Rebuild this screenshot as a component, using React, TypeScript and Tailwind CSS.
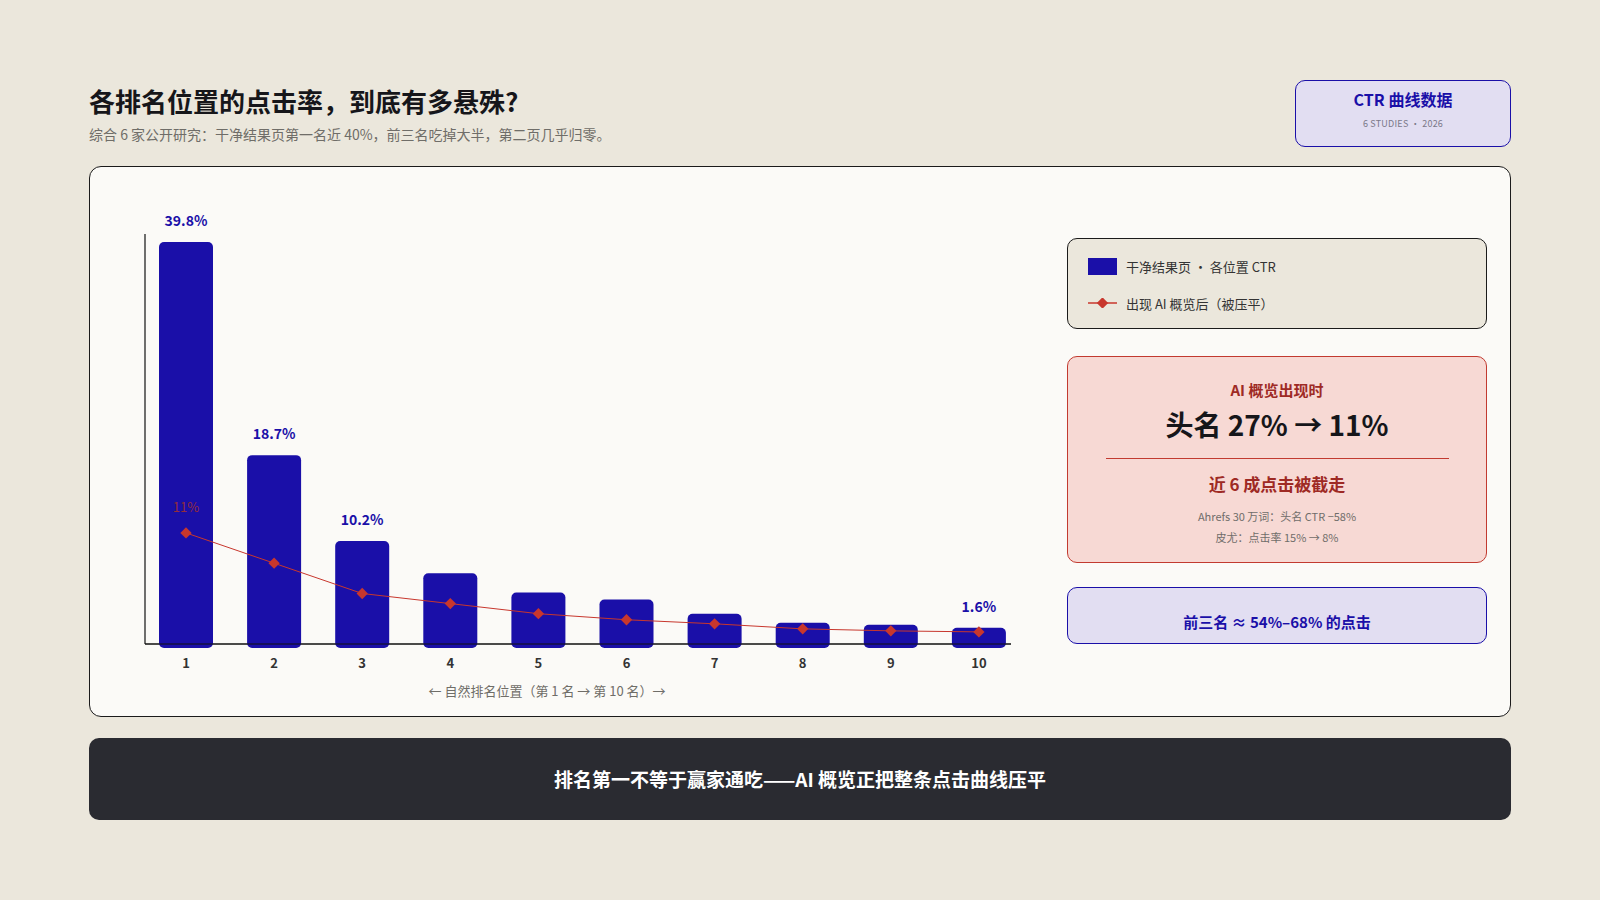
export default function App() {
  const bars = [39.8, 18.7, 10.2, 7.0, 5.1, 4.4, 3.0, 2.1, 1.9, 1.6];
  const line = [11, 8, 5, 4, 3, 2.4, 2, 1.5, 1.3, 1.2];
  const k = 10.1;
  const base = 477; // relative to card top (643-166)
  const x0 = 69; // bar1 left (158-89)
  const step = 88.1;
  const bw = 54;
  const cx = (i: number) => x0 + i * step + bw / 2;
  const labels: Record<number, string> = { 0: "39.8%", 1: "18.7%", 2: "10.2%", 9: "1.6%" };
  const pts = line.map((v, i) => `${cx(i)},${base - v * k}`).join(" ");
  return (
    <div className="w-[1600px] h-[900px] bg-[#ebe7dc] px-[89px] pt-[82px]" style={{ fontFamily: '"Noto Sans CJK SC", "Noto Sans", sans-serif' }}>
      <div className="flex justify-between items-start h-[84px]">
        <div>
          <h1 className="text-[26px] font-bold text-[#16161a] leading-[38px]">各排名位置的点击率，到底有多悬殊?</h1>
          <p className="text-[14px] text-[#6f6d68] mt-[4px]">综合 6 家公开研究：干净结果页第一名近 40%，前三名吃掉大半，第二页几乎归零。</p>
        </div>
        <div className="w-[216px] h-[67px] -mt-[2px] rounded-[10px] border-[1.5px] border-[#1a0fa8] bg-[#e2def2] flex flex-col items-center pt-[6px]">
          <div className="text-[16px] font-bold text-[#1a0fa8]">CTR 曲线数据</div>
          <div className="text-[9px] text-[#7a7888] tracking-wide mt-[6px]">6 STUDIES · 2026</div>
        </div>
      </div>
      <div className="h-[551px] rounded-[12px] border-[1.5px] border-[#1b1b1b] bg-[#fbfaf7] flex">
        <svg width="950" height="548" className="shrink-0">
          <line x1="55" y1="67" x2="55" y2={base} stroke="#111" strokeWidth="1.2" />
          <line x1="55" y1={base} x2="921" y2={base} stroke="#111" strokeWidth="1.2" />
          {bars.map((v, i) => (
            <g key={i}>
              <rect x={x0 + i * step} y={base - v * k} width={bw} height={v * k + 4} rx="5" fill="#1a0fa8" />
              <text x={cx(i)} y={base + 24} textAnchor="middle" fontSize="13" fontWeight="700" fill="#333">{i + 1}</text>
              {labels[i] && (
                <text x={cx(i)} y={base - v * k - 16} textAnchor="middle" fontSize="14" fontWeight="700" fill="#1a0fa8">{labels[i]}</text>
              )}
            </g>
          ))}
          <rect x={x0} y={base - 1} width={step * 9 + bw} height="3" fill="#fbfaf7" opacity="0" />
          <line x1="55" y1={base} x2="921" y2={base} stroke="#111" strokeWidth="1.2" />
          <polyline points={pts} fill="none" stroke="#c8372d" strokeWidth="1" />
          {line.map((v, i) => (
            <rect key={i} x={cx(i) - 4} y={base - v * k - 4} width="8" height="8" fill="#c8372d" transform={`rotate(45 ${cx(i)} ${base - v * k})`} />
          ))}
          <text x={cx(0)} y={base - 11 * k - 21} textAnchor="middle" fontSize="13" fill="#a8332a" opacity="0.85">11%</text>
          <text x="457" y={base + 52} textAnchor="middle" fontSize="13" fill="#6f6d68">← 自然排名位置（第 1 名 → 第 10 名）→</text>
        </svg>
        <div className="flex-1 pt-[71px] pr-[23px] pl-[27px] flex flex-col">
          <div className="h-[91px] rounded-[10px] border-[1.5px] border-[#1b1b1b] bg-[#ebe7dc] px-[20px] pt-[18px] flex flex-col gap-[17px] text-[13px] text-[#333]">
            <div className="flex items-center gap-[9px]"><span className="w-[29px] h-[17px] bg-[#1a0fa8]" />干净结果页 · 各位置 CTR</div>
            <div className="flex items-center gap-[9px]">
              <svg width="29" height="10"><line x1="0" y1="5" x2="29" y2="5" stroke="#c8372d" strokeWidth="1.5" /><rect x="10.5" y="1" width="8" height="8" fill="#c8372d" transform="rotate(45 14.5 5)" /></svg>
              出现 AI 概览后（被压平）
            </div>
          </div>
          <div className="mt-[27px] h-[207px] rounded-[10px] border-[1.5px] border-[#c23a30] bg-[#f7d9d4] flex flex-col items-center pt-[22px]">
            <div className="text-[15px] font-bold text-[#9e2a24]">AI 概览出现时</div>
            <div className="text-[28px] font-bold text-[#16161a] mt-[2px] leading-[40px]">头名 27% → 11%</div>
            <div className="w-[343px] h-[1px] bg-[#c23a30] mt-[14px]" />
            <div className="text-[17px] font-bold text-[#9e2a24] mt-[12px]">近 6 成点击被截走</div>
            <div className="text-[11px] text-[#706d6a] mt-[10px] leading-[21px] text-center">Ahrefs 30 万词：头名 CTR −58%<br />皮尤：点击率 15% → 8%</div>
          </div>
          <div className="mt-[24px] h-[57px] rounded-[10px] border-[1.5px] border-[#1a0fa8] bg-[#e2def2] flex items-center justify-center pt-[14px] text-[15px] font-bold text-[#1a0fa8]">前三名 ≈ 54%–68% 的点击</div>
        </div>
      </div>
      <div className="mt-[21px] h-[82px] rounded-[10px] bg-[#2a2b31] flex items-center justify-center text-[19px] font-bold text-white">排名第一不等于赢家通吃——AI 概览正把整条点击曲线压平</div>
    </div>
  );
}
